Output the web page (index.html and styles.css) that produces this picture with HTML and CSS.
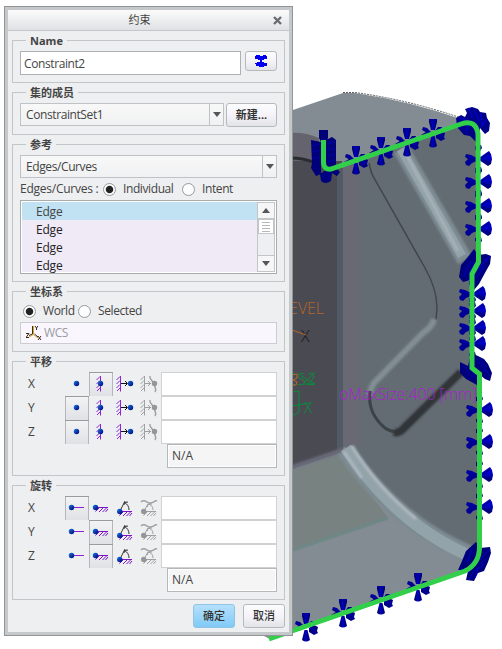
FILE: index.html
```html
<!DOCTYPE html>
<html lang="zh-CN">
<head>
<meta charset="utf-8">
<title>约束</title>
<link rel="stylesheet" href="styles.css">
</head>
<body>
<svg class="scene" width="502" height="649" viewBox="0 0 502 649">
  <defs>
    <linearGradient id="cone"><stop offset="0" stop-color="#000050"/><stop offset=".45" stop-color="#0000c0"/><stop offset="1" stop-color="#000060"/></linearGradient>
    <linearGradient id="coneV" x2="0" y2="1"><stop offset="0" stop-color="#0000b8"/><stop offset=".45" stop-color="#0000c8"/><stop offset="1" stop-color="#000068"/></linearGradient>
    <linearGradient id="sphere" x2="1" y2="1"><stop offset="0" stop-color="#1a78e8"/><stop offset="1" stop-color="#000070"/></linearGradient>
    <filter id="soft" x="-20%" y="-20%" width="140%" height="140%"><feGaussianBlur stdDeviation="1.3"/></filter>
    <g id="h">
      <path d="M-4-14H4V-11L2-3H-2L-4-11Z" fill="url(#cone)"/><path d="M-4-14H4V-12H-4Z" fill="#0000a0"/>
      <path d="M-1.500 3H1.500L4 13Q0 16-4 13Z" fill="url(#cone)"/>
      <path d="M-10-6L-6-5L-1 0L-4 1L-11-3ZM-12 2L-7-1L-2 1L-7 4ZM2-2L5-6L9-6L8-3L4 0ZM3 1L8-2L12 0L11 4L12 6L8 8L3 5Z" fill="#000088"/>
      <path d="M-9-5L-3-1M4-3L8-5M5 1L11 4" stroke="#0000b8"/>
    </g>
    <g id="v">
      <path d="M1-1L8-6L11-8L13-5L14 0L13 5L10 7L7 5L1 1Z" fill="url(#coneV)"/>
      <path d="M4-1L11-6M5 1L12 4" stroke="#000078"/>
      <path d="M-1-1L-7-4L-12-5L-13-2L-10 0L-13 3L-12 6L-9 7L-6 4L-1 2Z" fill="#000094"/>
      <path d="M-11-3L-4-1" stroke="#0000bc"/>
      <path d="M-3-13L3-14L4-11L2-8L-3-9ZM-3 9L3 8L4 12L2 14L-3 12Z" fill="#000080"/>
    </g>
  </defs>
  <path fill="#848c93" d="M290 111L343 93L355 93Q410 101 464 120L478 130V262L471 279V368L480 374V552L475 566L270 639L262 635Z"/>
  <path d="M343 92.500L355 92.500Q410 100 464 119" fill="none" stroke="#5d5f61" stroke-dasharray="2 1"/>
  <path fill="#646c73" d="M320 171L466 123L478 130V262L471 279V368L480 374V550Q415 530 345 447L290 466V171Z"/>
  <path fill="#65636d" d="M290 133Q305 132 319 138V164H290Z"/>
  <path fill="#4a4a53" d="M290 161H342V449L290 467Z"/>
  <path d="M290 158Q304 158 316 163" fill="none" stroke="#292c30" stroke-width="3"/>
  <path fill="#525b65" d="M337 170L343 168V449L337 451Z"/>
  <path fill="#696973" d="M343 168L361 162V447H343Z"/>
  <path fill="#788281" d="M290 472L341 454L388 518L290 550Z"/>
  <path d="M290 468L343 450" stroke="#656675" stroke-width="5" filter="url(#soft)"/>
  <path d="M293 550L388 518" stroke="#6d8886" stroke-width="3"/>
  <path d="M345 450Q398 527 476 557" fill="none" stroke="#7d8b92" stroke-width="18" filter="url(#soft)"/>
  <path d="M346 448Q398 527 475 558" fill="none" stroke="#93a3aa" stroke-width="12"/>
  <path d="M352 446Q375 485 416 519M344 452L362 478" fill="none" stroke="#afb8c0" stroke-width="3" filter="url(#soft)"/>
  <path d="M401 149L465 260" stroke="#7e8c94" stroke-width="16" filter="url(#soft)"/>
  <path d="M401 149L462 256" stroke="#93a3aa" stroke-width="9"/>
  <path d="M405 152L458 251" stroke="#b0b8bd" stroke-width="2" filter="url(#soft)"/>
  <path d="M369 163Q371 173 374 178L425 268Q437 289 437 308L436 320" fill="none" stroke="#41454c" stroke-width="1.500"/>
  <path d="M434 319Q433 326 423 333L374 383Q370 389 370 396" fill="none" stroke="#818e93" stroke-width="6" filter="url(#soft)"/>
  <path d="M370 391Q367 413 385 428Q394 434 402 430L460 372" fill="none" stroke="#3c4348" stroke-width="3"/>
  <path d="M394 432Q399 434 405 427L461 372" fill="none" stroke="#303638" stroke-width="8" filter="url(#soft)"/>

  <g class="label-text">
    <text x="281" y="314" fill="#b56627" textLength="43" font-size="16">LEVEL</text>
    <text x="339" y="400" fill="#a71fd0" textLength="138" font-size="16">oMaxSize:400 [mm]</text>
    <text x="301" y="342" fill="#17171a" font-size="16">X</text>
    <text x="286" y="385" fill="#078e3b" textLength="30" font-size="16">CS2</text>
    <text x="285" y="413" fill="#078e3b" textLength="27" font-size="15">0X</text>
  </g>
  <path d="M292 330L306 335M292 375L297 374L297 378L293 380L297 382L296 385L292 385" fill="none" stroke="#b56627"/>
  <path d="M292 392L299 391V412L292 416M292 406L310 403M300 375L315 384L303 384L315 372" fill="none" stroke="#078e3b"/>

  <use href="#h" x="356" y="160"/><use href="#h" x="381" y="151"/><use href="#h" x="407" y="142"/><use href="#h" x="433" y="133"/>
  <use href="#v" x="478" y="159"/><use href="#v" x="478" y="182"/><use href="#v" x="478" y="206"/><use href="#v" x="478" y="229"/>
  <use href="#v" x="472" y="294"/><use href="#v" x="472" y="311"/><use href="#v" x="472" y="328"/><use href="#v" x="472" y="344"/>
  <use href="#v" x="479" y="410"/><use href="#v" x="479" y="442"/><use href="#v" x="479" y="475"/><use href="#v" x="479" y="507"/>
  <use href="#h" x="306" y="627"/><use href="#h" x="343" y="613"/><use href="#h" x="381" y="600"/><use href="#h" x="418" y="587"/>

  <path fill="#000078" d="M319 130H328V138L326 142H321L319 138ZM311 140L321 142V174L316 176L311 168L312 163ZM326 140L332 137L336 140V168L340 172L337 176L332 173L331 181Q325 185 321 181L320 174L326 170Z"/>
  <path d="M312 146L319 144M312 152L319 150M312 159L319 157M328 144L335 142M328 150L335 148M328 156L335 154M328 162L335 160M325 173L322 180M329 173L330 181" stroke="#0000b0"/>
  <path fill="#000088" d="M456 118L461 115L465 117L467 113L465 109L472 107L478 109L480 112L486 113L487 118L490 123L489 131L485 134L480 128L479 145L474 140L470 136L464 135L457 127Z"/>
  <path d="M468 108L473 118M474 109L479 121M481 113L482 125M487 119L481 127M459 118L469 121M466 131L470 123" stroke="#0000c4" stroke-width="1.500"/>
  <path fill="#00007c" d="M474 249L478 255L486 254L491 256L490 264L486 271L479 284L474 290L470 280L463 282L459 277L461 265L467 258Z"/>
  <path d="M471 261L464 276M475 262L469 274M487 258L478 270M490 256L481 266M485 265L477 277" stroke="#0000b8" stroke-width="1.300"/>
  <path fill="#00007c" d="M460 362L468 366L471 353L478 356L484 359L488 364L492 373L490 381L485 379L478 373L477 385L466 379L460 373Z"/>
  <path d="M476 358L487 373M480 358L490 377M463 365L473 378M469 366L477 380" stroke="#0000b0"/>
  <path fill="#00007c" d="M476 542L480 548L490 547L491 553L488 562L484 571L478 573L474 581L466 580L468 571L458 570L462 561L466 551Z"/>
  <path d="M490 549L480 560M489 556L479 565M485 564L475 571M469 580L474 570M475 578L478 567M472 550L467 562" stroke="#0000c4"/>
  <path fill="none" stroke="#31cf4a" stroke-width="5" d="M323.500 140V163Q324 170 331 169L461 124Q476 119 478 134L478.500 262L472 274V368L479.500 374V548Q479 564 465 571L269 639"/>
</svg>

<svg class="defs" width="0" height="0">
  <symbol id="t-free" viewBox="0 0 24 24"><circle cx="11.500" cy="11.500" r="2.700" fill="url(#sphere)"/></symbol>
  <symbol id="t-fixed" viewBox="0 0 24 24"><path d="M11.500 4V19.500M11 4.500L7.500 8M11 8.500L7.500 12M11 12.500L7.500 16M11 16L8 19" fill="none" stroke="#8a22dd"/><circle cx="11.500" cy="11.500" r="2.700" fill="url(#sphere)"/></symbol>
  <symbol id="t-pre" viewBox="0 0 24 24"><path d="M7.500 4V19.500M7 4.500L3.500 8M7 8.500L3.500 12M7 12.500L3.500 16M7 16L4 19" fill="none" stroke="#8a22dd"/><path d="M8 11.500H14M12 9L14.500 11.500L12 14" fill="none" stroke="#111"/><circle cx="17.500" cy="11.500" r="2.700" fill="url(#sphere)"/></symbol>
  <symbol id="t-func" viewBox="0 0 24 24"><path d="M7.500 4V19.500M7 4.500L3.500 8M7 8.500L3.500 12M7 12.500L3.500 16M7 16L4 19M8 11.500H14M11 9L13.500 11.500L11 14" fill="none" stroke="#a0a0a0"/><path d="M13 4C12 8 16 8 17 12S20 17 18 20" fill="none" stroke="#a0a0a0" stroke-width="1.500"/><circle cx="17.500" cy="11.500" r="2.700" fill="#969696"/></symbol>
  <symbol id="r-free" viewBox="0 0 24 24"><path d="M7 11.500H19" stroke="#8a22dd"/><circle cx="6.500" cy="11.500" r="2.700" fill="url(#sphere)"/></symbol>
  <symbol id="r-fixed" viewBox="0 0 24 24"><path d="M7 11.500H19M10 12L6.500 15.500M14 12L10 16M17.500 12L13.500 16M19 13L16.500 16" stroke="#7b14cb"/><circle cx="6.500" cy="11.500" r="2.700" fill="url(#sphere)"/></symbol>
  <symbol id="r-pre" viewBox="0 0 24 24"><path d="M7 15L12 5M11.500 6.500Q16 9 16 14M11 9L11.500 6.500L15 6" fill="none" stroke="#333"/><path d="M7 15.500H19M10 16L6.500 19.500M14 16L10 20M17.500 16L13.500 20M19 17L16.500 20" stroke="#7b14cb"/><circle cx="6.700" cy="15.500" r="2.700" fill="url(#sphere)"/></symbol>
  <symbol id="r-func" viewBox="0 0 24 24"><path d="M4 6C8 2 10 8 14 7S18 4 20 5" fill="none" stroke="#a0a0a0" stroke-width="1.500"/><path d="M7 15L11 8M11 8Q16 9 16 14M10.500 11L11 8L15 8M7 15.500H19M10 16L6.500 19.500M14 16L10 20M17.500 16L13.500 20M19 17L16.500 20" fill="none" stroke="#a0a0a0"/><circle cx="6.700" cy="15.500" r="2.700" fill="#969696"/></symbol>
</svg>

<main class="dialog">
  <header class="titlebar"><h1>约束</h1><svg width="9" height="9" viewBox="0 0 9 9"><path d="M1 1L8 8M8 1L1 8" stroke="#6b6b70" stroke-width="2.400"/></svg></header>
  <div class="content">
    <fieldset class="group short"><legend>Name</legend>
      <div class="row">
        <div class="input name">Constraint2</div>
        <button class="btn color"><svg width="14" height="14" viewBox="0 0 14 14"><path fill="#0000ee" d="M2 1H6V2H9V1H12V2H13V5H10V6H8V8H10V9H13V12H10V13H5V12H2V10H1V9H3V8H6V6H4V5H1V2H2Z"/></svg></button>
      </div>
    </fieldset>
    <fieldset class="group short"><legend>集的成员</legend>
      <div class="row tight">
        <div class="combo set"><span>ConstraintSet1</span><i><b class="down"></b></i></div>
        <button class="btn new">新建...</button>
      </div>
    </fieldset>
    <fieldset class="group refs"><legend>参考</legend>
      <div class="combo"><span>Edges/Curves</span><i><b class="down"></b></i></div>
      <div class="radios ref-radios"><span class="lead">Edges/Curves :</span><em class="radio on"></em><span class="opt1">Individual</span><em class="radio"></em><span>Intent</span></div>
      <div class="list">
        <ul><li class="selected">Edge</li><li>Edge</li><li>Edge</li><li>Edge</li></ul>
        <div class="scroll"><i><b class="up"></b></i><div class="thumb"></div><i class="end"><b class="down"></b></i></div>
      </div>
    </fieldset>
    <fieldset class="group coord"><legend>坐标系</legend>
      <div class="radios"><em class="radio on"></em><span class="opt2">World</span><em class="radio"></em><span>Selected</span></div>
      <div class="wcs"><svg width="16" height="16" viewBox="0 0 16 16"><path d="M7.500 1V9.500L3 12M7.500 9.500L12 13" fill="none" stroke="#d9a520"/><path d="M6.500 1V9L3 10.500M8.500 9L12 12M9 1L10.500 3V5M12 1L10.500 3M0 8.500H3L0 12.500H3M12 11L15 15M15 11L12 15" fill="none" stroke="#3a2a20"/></svg><span>WCS</span></div>
    </fieldset>
    <fieldset class="group matrix"><legend>平移</legend>
      <div class="dof"><label>X</label><svg><use href="#t-free"/></svg><svg class="pressed"><use href="#t-fixed"/></svg><svg><use href="#t-pre"/></svg><svg><use href="#t-func"/></svg><div class="cell"></div></div>
      <div class="dof"><label>Y</label><svg class="pressed"><use href="#t-free"/></svg><svg><use href="#t-fixed"/></svg><svg><use href="#t-pre"/></svg><svg><use href="#t-func"/></svg><div class="cell"></div></div>
      <div class="dof"><label>Z</label><svg class="pressed"><use href="#t-free"/></svg><svg><use href="#t-fixed"/></svg><svg><use href="#t-pre"/></svg><svg><use href="#t-func"/></svg><div class="cell"></div></div>
      <div class="unit">N/A</div>
    </fieldset>
    <fieldset class="group matrix"><legend>旋转</legend>
      <div class="dof"><label>X</label><svg class="pressed"><use href="#r-free"/></svg><svg><use href="#r-fixed"/></svg><svg><use href="#r-pre"/></svg><svg><use href="#r-func"/></svg><div class="cell"></div></div>
      <div class="dof"><label>Y</label><svg><use href="#r-free"/></svg><svg class="pressed"><use href="#r-fixed"/></svg><svg><use href="#r-pre"/></svg><svg><use href="#r-func"/></svg><div class="cell"></div></div>
      <div class="dof"><label>Z</label><svg><use href="#r-free"/></svg><svg class="pressed"><use href="#r-fixed"/></svg><svg><use href="#r-pre"/></svg><svg><use href="#r-func"/></svg><div class="cell"></div></div>
      <div class="unit">N/A</div>
    </fieldset>
    <footer><button class="btn ok">确定</button><button class="btn">取消</button></footer>
  </div>
</main>
</body>
</html>
```
FILE: styles.css
```css
* { box-sizing: border-box; }
body { margin: 0; width: 502px; height: 649px; overflow: hidden; background: #fff; position: relative; font: 12px/16px "Open Sans", "Noto Sans CJK SC", sans-serif; letter-spacing: -.4px; color: #444; }
.scene { position: absolute; left: 0; top: 0; }
.defs { position: absolute; }
.label-text { font-family: "Open Sans", sans-serif; font-weight: 300; letter-spacing: 0; }
.dialog { position: absolute; left: 4px; top: 6px; width: 289px; height: 630px; border: 1px solid #929496; background: #eeeff1; box-shadow: inset 0 0 0 3px #c5c8ca; padding: 3px; }
.titlebar { height: 21px; display: flex; align-items: center; border-bottom: 1px solid #c4c6c8; background: linear-gradient(#fbfbfb, #dfe1e4); padding-right: 7px; }
.titlebar h1 { flex: 1; margin: 0; padding-right: 2px; text-align: center; font-size: 11px; line-height: 20px; font-weight: 400; letter-spacing: 0; }
.content { padding: 3px 4px 0; display: flex; flex-direction: column; gap: 3px; }
.group { margin: 0; min-width: 0; border: 1px solid #c3c6c8; padding: 4px 7px 0; width: 273px; }
.group legend { height: 13px; line-height: 13px; margin-left: 6px; padding: 0 4px; font-weight: 700; font-size: 11px; letter-spacing: 0; }
.short { height: 49px; }
.refs { height: 144px; }
.coord { height: 67px; }
.matrix { height: 121px; }
.row { display: flex; gap: 4px; }
.row.tight { gap: 2px; }
.input { background: #fff; border: 1px solid #aeb1b3; padding: 0 3px; }
.name { width: 221px; height: 24px; line-height: 23px; }
.btn { font: 500 11px/20px "Open Sans", "Noto Sans CJK SC", sans-serif; letter-spacing: 0; color: #333; border: 1px solid #b6b9bc; border-radius: 3px; background: linear-gradient(#fcfcfd, #f4f2f8 55%, #e2e4e7); padding: 0; width: 42px; height: 24px; }
.color { width: 32px; height: 20px; display: flex; justify-content: center; align-items: center; }
.new { width: 51px; font-weight: 700; }
.combo { display: flex; height: 23px; border: 1px solid #c0c3c5; background: linear-gradient(#f8f8f8, #f0f1f2); line-height: 21px; }
.combo span { flex: 1; padding-left: 5px; }
.combo i { width: 14px; border-left: 1px solid #c0c3c5; display: flex; justify-content: center; align-items: center; }
.set { width: 204px; }
.down, .up { border: 4px solid transparent; border-bottom: 0; border-top: 5px solid #55555a; width: 0; height: 0; }
.up { border-top: 0; border-bottom: 5px solid #55555a; }
.radios { display: flex; align-items: center; height: 20px; }
.ref-radios { height: 22px; }
.radio { width: 13px; height: 13px; border-radius: 50%; border: 1px solid #96999b; background: #fdfdfd; margin-right: 7px; flex: none; }
.radio.on { background: radial-gradient(circle at 50% 50%, #222 0 3.2px, #fdfdfd 4.2px); }
.lead { width: 83px; white-space: nowrap; letter-spacing: -.25px; }
.opt1 { width: 59px; }
.opt2 { width: 35px; }
.list { height: 74px; border: 1px solid #a9acae; background: #fff; padding: 1px 1px; display: flex; overflow: hidden; }
.list ul { list-style: none; margin: 0; padding: 0; flex: 1; background: #f0eaf7; color: #222; }
.list li { height: 18px; line-height: 19px; padding-left: 14px; letter-spacing: -.2px; }
.list .selected { background: #c0e2f3; color: #444; }
.scroll { width: 18px; border: 1px solid #c3c6c8; background: #eeeff1; display: flex; flex-direction: column; }
.scroll i { height: 16px; display: flex; align-items: center; justify-content: center; background: #f6f6f7; border-bottom: 1px solid #c3c6c8; }
.scroll .end { margin-top: auto; border-top: 1px solid #c3c6c8; border-bottom: 0; }
.thumb { height: 15px; border: 1px solid #c3c6c8; background: repeating-linear-gradient(#b8b8bb 0 1px, #fff 1px 3px) center / 8px 10px no-repeat #fff; }
.coord .radios { padding-left: 3px; height: 18px; }
.wcs { height: 22px; margin-top: 2px; border: 1px solid #cbcdd0; background: #f9f6fe; color: #9a9a9e; display: flex; align-items: center; padding-left: 5px; gap: 2px; }
.dof { display: flex; height: 24px; }
.dof label { width: 45px; padding-left: 8px; line-height: 24px; }
.dof svg { width: 24px; height: 24px; flex: none; display: block; }
.dof .pressed { background: linear-gradient(#999b9d 0 1px, transparent 1px), linear-gradient(90deg, #b4b6b8 0 1px, transparent 1px 23px, #b4b6b8 23px), linear-gradient(#f4f4f5, #dfe1e4); }
.cell { flex: 1; background: #fff; border: 1px solid #cfd1d3; }
.unit { width: 110px; height: 24px; margin-left: auto; border: 1px solid #b5b7b9; background: #f5f5f5; padding-left: 4px; line-height: 22px; letter-spacing: 0; box-shadow: inset 0 0 0 1px #fff; }
footer { display: flex; justify-content: flex-end; gap: 8px; padding-top: 1px; }
.ok { background: linear-gradient(#b5e0fb, #80caf6); border-color: #8fc4e4; }
```
